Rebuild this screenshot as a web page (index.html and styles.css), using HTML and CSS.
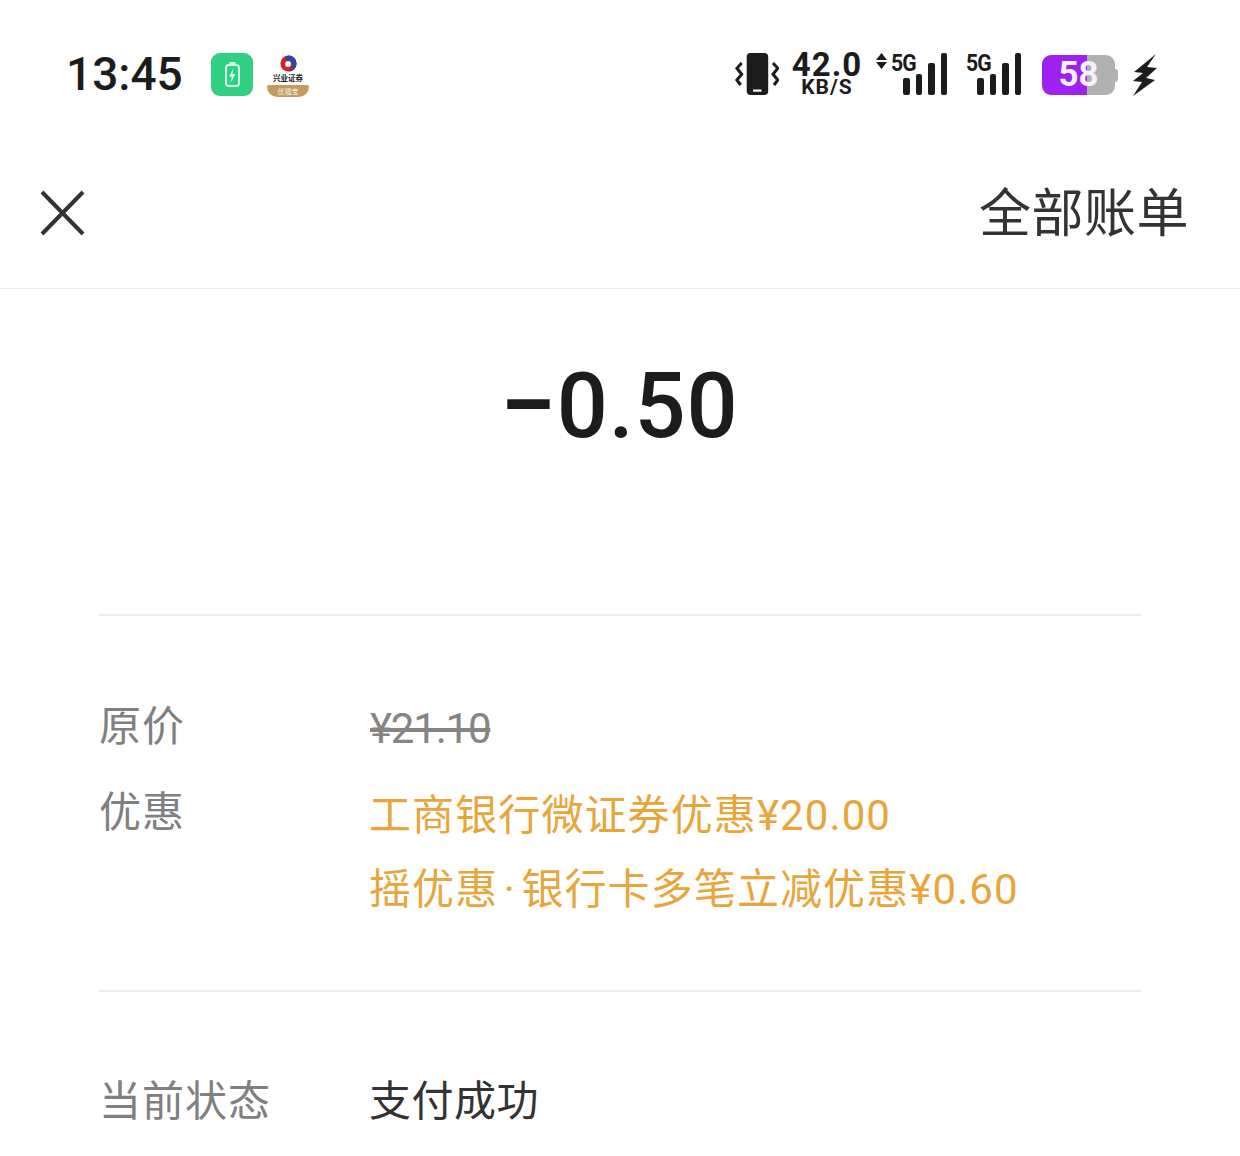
FILE: index.html
```html
<!DOCTYPE html>
<html lang="zh-CN">

<head>
    <meta charset="UTF-8">
    <title>账单详情</title>
    <link rel="stylesheet" href="styles.css">
</head>

<body>
    <div class="status-bar">
        <div class="status-left">
            <span class="clock">13:45</span>
            <span class="app-green">
                <svg width="42" height="43" viewBox="0 0 42 43">
                    <rect x="15" y="12" width="13" height="21" rx="3" fill="none" stroke="#d6f5e6" stroke-width="2"/>
                    <rect x="18.5" y="9" width="6" height="3" fill="#d6f5e6"/>
                    <path d="M22.5 15 L18 23.5 H20.8 L19.5 30 L24.5 21 H21.4 Z" fill="#d6f5e6"/>
                </svg>
            </span>
            <span class="app-logo">
                <svg width="17" height="17" viewBox="0 0 20 20">
                    <circle cx="10" cy="10" r="9.5" fill="#d2232a"/>
                    <path d="M10 .5 A9.5 9.5 0 0 1 10 19.5 C14 17 15.5 13 13 9.5 C11 7 7 7 6 5 C6 3 8 1 10 .5 Z" fill="#2b4a9b"/>
                    <circle cx="9.5" cy="10.5" r="3.4" fill="#fff"/>
                </svg>
                <span class="logo-name">兴业证券</span>
                <span class="logo-tag">优福宝</span>
            </span>
        </div>
        <div class="status-right">
            <svg class="vibrate" width="44" height="44" viewBox="0 0 44 44">
                <rect x="11.7" y="0" width="21.5" height="42" rx="4" fill="#1c1c1c"/>
                <rect x="18" y="36.5" width="8.5" height="2.2" fill="#fff"/>
                <path d="M6.7 10 L1.9 15.3 L6.7 21.3 L1.9 27 L5.7 32 M38 10 L42.8 15.3 L38 21.3 L42.8 27 L39 32" fill="none" stroke="#1c1c1c" stroke-width="3"/>
            </svg>
            <div class="speed">
                <span class="speed-num">42.0</span>
                <span class="speed-unit">KB/S</span>
            </div>
            <div class="signal signal-one">
                <svg class="arrows" width="11" height="16" viewBox="0 0 11 16">
                    <path d="M5.5 0 L11 7 H0 Z M0 9 H11 L5.5 16 Z" fill="#1c1c1c"/>
                </svg>
                <span class="net">5G</span>
                <div class="bars">
                    <i class="bar bar-1"></i><i class="bar bar-2"></i><i class="bar bar-3"></i><i class="bar bar-4"></i>
                </div>
            </div>
            <div class="signal signal-two">
                <span class="net">5G</span>
                <div class="bars">
                    <i class="bar bar-1"></i><i class="bar bar-2"></i><i class="bar bar-3"></i><i class="bar bar-4"></i>
                </div>
            </div>
            <div class="battery">
                <div class="battery-body"><span>58</span></div>
                <i class="battery-cap"></i>
            </div>
            <svg class="bolt" width="24" height="42" viewBox="0 0 24 42">
                <path d="M23 0 L1 18 L10 19 L0 27 L9 28 L0 42 L22 26 L13 24 L24 14 L14 13 Z" fill="#1c1c1c"/>
            </svg>
        </div>
    </div>

    <div class="nav-bar">
        <svg class="close" width="46" height="46" viewBox="0 0 46 46">
            <path d="M3 2 L44 44 M44 2 L3 44" fill="none" stroke="#333" stroke-width="4"/>
        </svg>
        <span class="nav-link">全部账单</span>
    </div>

    <div class="amount"><span class="minus">−</span>0.50</div>

    <div class="section">
        <div class="row row-price">
            <span class="label">原价</span>
            <span class="value value-old">¥21.10</span>
        </div>
        <div class="row">
            <span class="label">优惠</span>
            <div class="value value-promo">
                <div>工商银行微证券优惠¥20.00</div>
                <div>摇优惠<span class="dot">·</span>银行卡多笔立减优惠¥0.60</div>
            </div>
        </div>
    </div>

    <div class="section section-status">
        <div class="row">
            <span class="label">当前状态</span>
            <span class="value value-status">支付成功</span>
        </div>
    </div>
</body>

</html>
```
FILE: styles.css
```css
body {
    margin: 0;
    height: 1156px;
    overflow: hidden;
    background: #fff;
    color: #1c1c1c;
    font-family: Roboto, "Noto Sans CJK SC", sans-serif;
}

.status-bar {
    box-sizing: border-box;
    height: 140px;
    padding: 53px 83px 0 66px;
    display: flex;
    justify-content: space-between;
    align-items: flex-start;
}

.status-left {
    display: flex;
    align-items: flex-start;
}

.clock {
    width: 145px;
    font-size: 46px;
    line-height: 42px;
    font-weight: 500;
}

.app-green {
    width: 42px;
    height: 43px;
    border-radius: 9px;
    background: #2fd07f;
    margin-right: 14px;
}

.app-green svg {
    display: block;
}

.app-logo {
    width: 42px;
    height: 44px;
    padding-top: 2px;
    box-sizing: border-box;
    display: flex;
    flex-direction: column;
    align-items: center;
}

.app-logo svg {
    display: block;
}

.logo-name {
    font-size: 7.5px;
    line-height: 8px;
    margin-top: 2px;
    white-space: nowrap;
    font-weight: 700;
    font-family: "Noto Sans CJK SC", sans-serif;
}

.logo-tag {
    width: 42px;
    height: 12px;
    margin-top: 3px;
    border-radius: 2px 2px 12px 12px;
    background: #c49c5e;
    color: #f6efe2;
    font-size: 7px;
    line-height: 12px;
    text-align: center;
    font-family: "Noto Sans CJK SC", sans-serif;
}

.status-right {
    display: flex;
    align-items: flex-start;
}

.vibrate {
    margin-right: 13px;
}

.speed {
    width: 70px;
    margin-top: -2px;
    display: flex;
    flex-direction: column;
    align-items: center;
    margin-right: 14px;
    font-weight: 700;
}

.speed-num {
    font-size: 33px;
    line-height: 28px;
    letter-spacing: 1px;
}

.speed-unit {
    margin-top: -1px;
    font-size: 21px;
    line-height: 18px;
    font-weight: 700;
    letter-spacing: 1px;
}

.signal {
    position: relative;
    height: 42px;
}

.signal-one {
    width: 71px;
    margin-right: 19px;
}

.signal-two {
    width: 55px;
    margin-right: 21px;
}

.arrows {
    position: absolute;
    left: 0;
    top: 0;
}

.net {
    position: absolute;
    top: -2px;
    font-size: 24px;
    line-height: 24px;
    font-weight: 700;
    letter-spacing: -1px;
    transform: scaleX(0.88);
    transform-origin: left center;
}

.signal-one .net {
    left: 15px;
}

.signal-two .net {
    left: 0;
}

.bars {
    position: absolute;
    right: 0;
    bottom: 0;
    display: flex;
    align-items: flex-end;
    gap: 6px;
}

.bar {
    width: 6.5px;
    border-radius: 2px;
    background: #1c1c1c;
}

.bar-1 {
    height: 17px;
}

.bar-2 {
    height: 21px;
}

.bar-3 {
    height: 32px;
}

.bar-4 {
    height: 42px;
}

.battery {
    display: flex;
    align-items: center;
    margin-right: 15px;
    margin-top: 2px;
}

.battery-body {
    width: 73px;
    height: 40px;
    box-sizing: border-box;
    border-radius: 9px;
    background: linear-gradient(to right, #9d22f0 0 45px, #b1b1b1 45px);
    color: #f5f0fa;
    text-align: center;
    font-size: 35px;
    line-height: 40px;
    font-weight: 700;
}

.battery-cap {
    width: 3px;
    height: 13px;
    border-radius: 0 3px 3px 0;
    background: #b1b1b1;
}

.bolt {
    margin-top: 1px;
}

.nav-bar {
    box-sizing: border-box;
    height: 149px;
    padding: 2px 51px 0 39px;
    display: flex;
    justify-content: space-between;
    align-items: center;
    border-bottom: 1px solid #ededed;
}

.close {
    margin-bottom: 4px;
}

.nav-link {
    font-size: 52px;
    line-height: 70px;
    letter-spacing: 0.5px;
    color: #333;
}

.amount {
    height: 325px;
    box-sizing: border-box;
    padding-top: 63px;
    padding-right: 2px;
    text-align: center;
    font-size: 90px;
    line-height: 110px;
    font-weight: 500;
    letter-spacing: 0.8px;
}

.minus {
    font-size: 102px;
    line-height: 90px;
    vertical-align: -3px;
    letter-spacing: 0;
}

.section {
    margin: 0 99px;
    padding-top: 81px;
    height: 376px;
    box-sizing: border-box;
    border-top: 2px solid #ededed;
}

.section-status {
    height: auto;
    padding-top: 80px;
}

.row {
    display: flex;
    font-size: 42px;
    line-height: 60px;
}

.row-price {
    margin-bottom: 24px;
}

.label {
    width: 270px;
    color: #808080;
    flex-shrink: 0;
    letter-spacing: 1px;
}

.value {
    color: #333;
}

.value-old {
    height: 60px;
    margin-left: 1px;
    padding-top: 2px;
    color: #858585;
    text-decoration: line-through;
    letter-spacing: -1.2px;
}

.value-promo {
    margin-top: -4px;
    color: #e8a63a;
    line-height: 74px;
    letter-spacing: 1.1px;
}

.dot {
    margin: 0 5.5px;
}

.value-status {
    letter-spacing: 0.5px;
}
```
